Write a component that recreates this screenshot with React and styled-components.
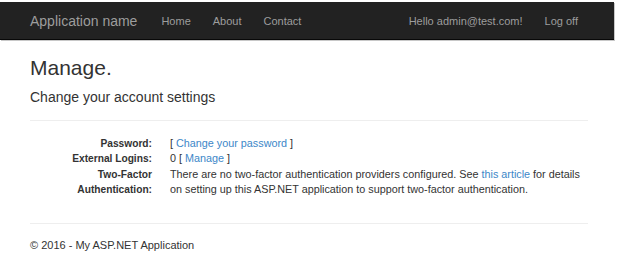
import React from "react";
import styled, { createGlobalStyle } from "styled-components";

const GlobalStyle = createGlobalStyle`
  html, body {
    margin: 0;
    padding: 0;
    background: #fff;
  }
  body {
    font-family: "Liberation Sans", Arial, sans-serif;
    color: #333;
  }
`;

const Page = styled.div`
  padding-top: 2px;
  width: 617px;
`;

const Navbar = styled.nav`
  display: flex;
  align-items: center;
  height: 38px;
  margin-right: 3px;
  padding: 0 36px 0 30px;
  background: #222;
  border-bottom: 1px solid #080808;
  box-shadow: 1px 1px 0 #c8c8c8;
  box-sizing: border-box;
`;

const Brand = styled.a`
  font-size: 14px;
  color: #9d9d9d;
  text-decoration: none;
  margin-right: 24px;
`;

const NavList = styled.div`
  display: flex;
  align-items: center;
  gap: 22px;
  margin-left: ${(p) => (p.right ? "auto" : "0")};
`;

const NavLink = styled.a`
  font-size: 11px;
  color: #9d9d9d;
  text-decoration: none;
`;

const Container = styled.main`
  padding: 0 29px 0 30px;
  width: 558px;
`;

const Title = styled.h1`
  margin: 16px 0 0;
  font-size: 21px;
  line-height: 23px;
  font-weight: normal;
`;

const Subtitle = styled.h3`
  margin: 10px 0 0;
  font-size: 14px;
  line-height: 16px;
  font-weight: normal;
`;

const Rule = styled.hr`
  margin: ${(p) => p.spacing};
  border: 0;
  border-top: 1px solid #eee;
`;

const Details = styled.dl`
  display: grid;
  grid-template-columns: 122px 1fr;
  column-gap: 18px;
  margin: 15px 0 0;
  font-size: 10.8px;
  line-height: 15.4px;
`;

const Term = styled.dt`
  font-weight: bold;
  font-size: 10.2px;
  text-align: right;
`;

const Desc = styled.dd`
  margin: 0;
`;

const Link = styled.a`
  color: #3c87c8;
  text-decoration: none;
`;

const Footer = styled.footer`
  margin-top: 13px;
  font-size: 11px;
  line-height: 16px;
`;

export default function App() {
  return (
    <Page>
      <GlobalStyle />
      <Navbar>
        <Brand href="#">Application name</Brand>
        <NavList>
          <NavLink href="#">Home</NavLink>
          <NavLink href="#">About</NavLink>
          <NavLink href="#">Contact</NavLink>
        </NavList>
        <NavList right>
          <NavLink href="#">Hello admin@test.com!</NavLink>
          <NavLink href="#">Log off</NavLink>
        </NavList>
      </Navbar>
      <Container>
        <Title>Manage.</Title>
        <Subtitle>Change your account settings</Subtitle>
        <Rule spacing="15px 0 0" />
        <Details>
          <Term>Password:</Term>
          <Desc>
            [ <Link href="#">Change your password</Link> ]
          </Desc>
          <Term>External Logins:</Term>
          <Desc>
            0 [ <Link href="#">Manage</Link> ]
          </Desc>
          <Term>Two-Factor Authentication:</Term>
          <Desc>
            There are no two-factor authentication providers configured. See{" "}
            <Link href="#">this article</Link> for details on setting up this
            ASP.NET application to support two-factor authentication.
          </Desc>
        </Details>
        <Rule spacing="25px 0 0" />
        <Footer>© 2016 - My ASP.NET Application</Footer>
      </Container>
    </Page>
  );
}
